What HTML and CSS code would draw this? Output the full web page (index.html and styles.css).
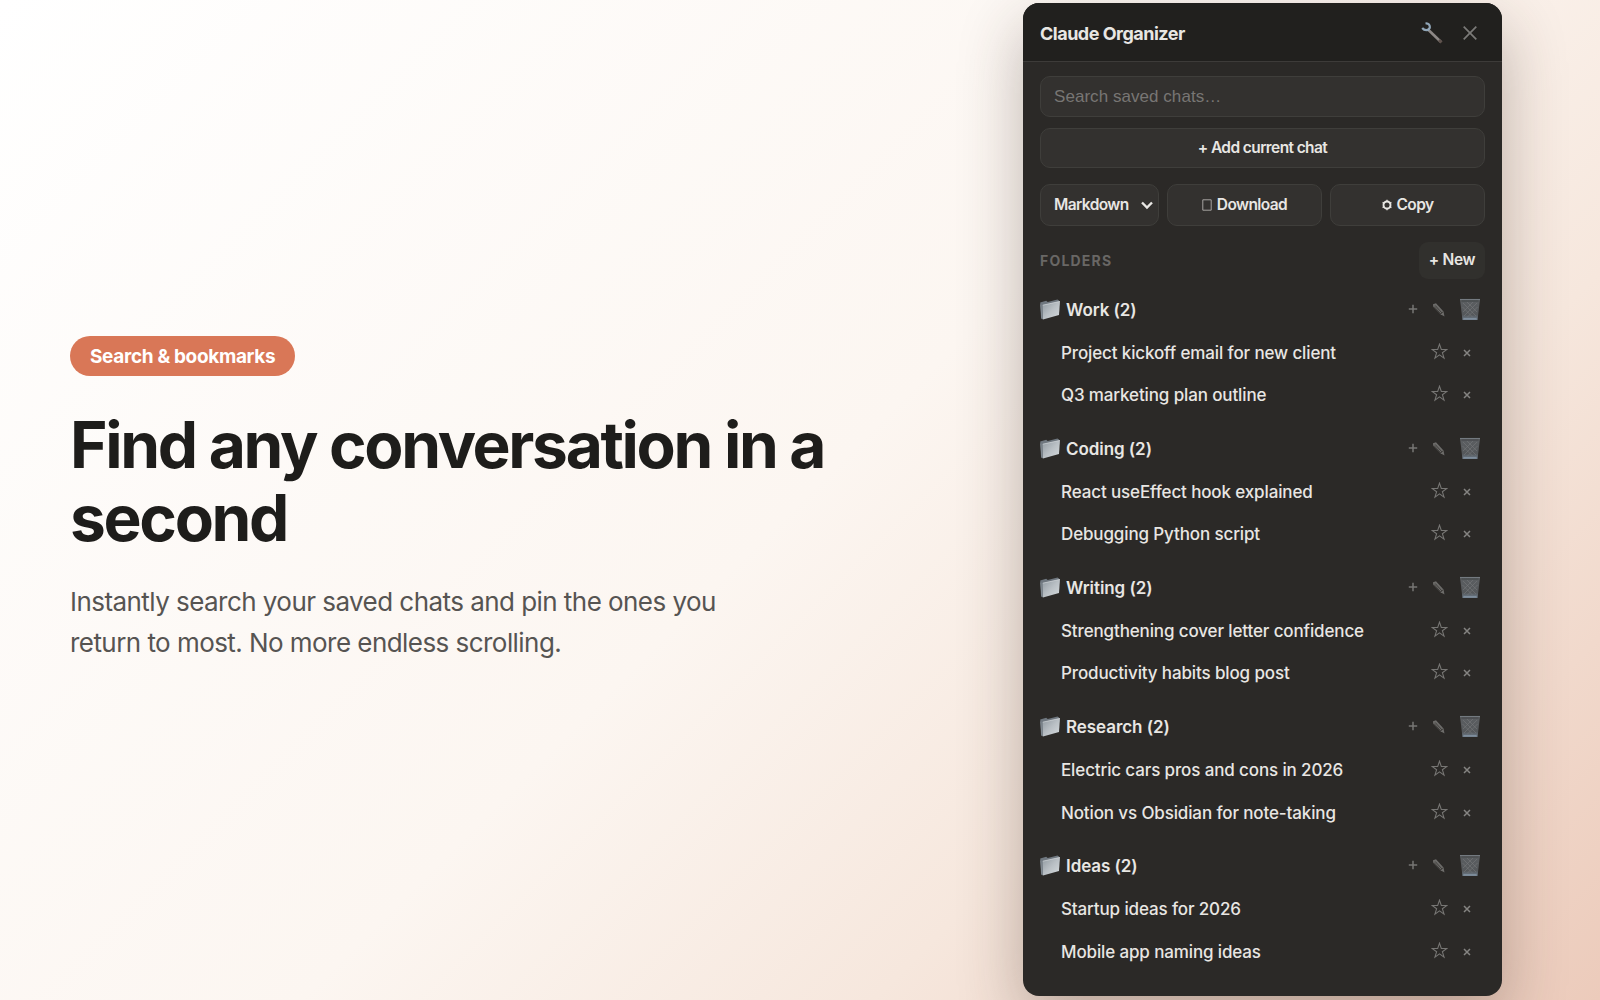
FILE: index.html
```html
<!DOCTYPE html>
<html lang="en">
<head>
<meta charset="utf-8">
<title>Claude Organizer</title>
<link rel="stylesheet" href="styles.css">
</head>
<body>
<svg class="defs" aria-hidden="true">
  <defs>
    <linearGradient id="paper" x1="0" y1="0" x2="1" y2="1"><stop offset="0" stop-color="#8f989f"/><stop offset=".5" stop-color="#b9bfc4"/><stop offset="1" stop-color="#d5dadd"/></linearGradient>
    <linearGradient id="bin" x1="0" y1="0" x2="0" y2="1"><stop offset="0" stop-color="#5c5f62"/><stop offset=".75" stop-color="#55585b"/><stop offset="1" stop-color="#71808f"/></linearGradient>
    <symbol id="i-folder" viewBox="0 0 21 21">
      <path d="M.2 3.500 6.200 1.800 7.700 3 17.500.5 19 1.500v3L2.500 20.500 1 18.500z" fill="#6f777f"/>
      <path d="M2.600 6 20 2.200 19 16 3 20.500z" fill="url(#paper)"/>
      <path d="M.8 5.500 2 20" stroke="#848d94" fill="none"/>
      <path d="M2.800 6.200 20 2.400" stroke="#dadee0" stroke-width=".6"/>
    </symbol>
    <symbol id="i-trash" viewBox="0 0 22 23">
      <path d="M1 1.500h20L18.500 22h-15z" fill="url(#bin)"/>
      <path d="M4 5l13 13M8 4l10 10M3.500 9l10 10M18 5 5 18M14 4 4 14M18.500 9l-10 10" stroke="#77797b" stroke-width=".6" fill="none"/>
      <path d="M1 1.500h20" stroke="#747a80" stroke-width="1.100" fill="none"/>
      <path d="M4.500 20.800h13" stroke="#8494a3" stroke-width="1.200" fill="none"/>
      <path d="M2.400 3h17.200" stroke="#46494b" stroke-width="1.200"/>
    </symbol>
    <symbol id="i-pencil" viewBox="0 0 14 16">
      <path d="M1 2.200 4 1.200 11.500 9.500 12.500 14.500 8.500 12.200 1.200 4.800z" fill="#6d6c6a"/>
      <path d="M3.200 3.500 10 11M2 4.500 8.800 12M8.800 12l2.400-2.500" stroke="#33312f" stroke-width=".8" fill="none"/>
    </symbol>
    <symbol id="i-star" viewBox="0 0 16 16">
      <path d="M8 1.100 9.700 6.100H15L10.700 9.200l1.600 5.100L8 11.200l-4.300 3.100 1.600-5.100L1 6.100h5.300z" fill="none" stroke="#777674" stroke-width="1"/>
    </symbol>
    <symbol id="i-plus" viewBox="0 0 10 10"><path d="M5 .8v8.400M.8 5h8.400" stroke="#777674" stroke-width="1.500"/></symbol>
    <symbol id="i-x" viewBox="0 0 8 8"><path d="M1 1l6 6M7 1 1 7" stroke="#858482" stroke-width="1.500"/></symbol>
  </defs>
</svg>
<main class="stage">
  <section class="hero">
    <span class="pill">Search &amp; bookmarks</span>
    <h1 class="headline">Find any conversation in a<br>second</h1>
    <p class="lead">Instantly search your saved chats and pin the ones you<br>return to most. No more endless scrolling.</p>
  </section>
  <aside class="panel">
    <header class="panel-head">
      <h2 class="panel-title">Claude Organizer</h2>
      <svg class="wrench" viewBox="0 0 22 22"><path d="M7 7.500 20 20" stroke="#8d8886" stroke-width="2.600"/><path d="M18 18l2.500 2.500" stroke="#5f524d" stroke-width="3"/><path d="M4.500 1.500c3-.5 4.800 1.800 4.200 4.500C7.500 8.800 3.500 9 1.200 6" fill="none" stroke="#91a6b8" stroke-width="2.200"/></svg>
      <svg class="close" viewBox="0 0 14 14"><path d="M.7.7l12.600 12.600M13.300.7.7 13.300" stroke="#7b7a78" stroke-width="1.700"/></svg>
    </header>
    <div class="panel-body">
      <div class="field">Search saved chats…</div>
      <button class="btn add">+ Add current chat</button>
      <div class="tools">
        <div class="btn select"><span>Markdown</span><svg class="chev" viewBox="0 0 14 10"><path d="M2 2.500l5 5 5-5" fill="none" stroke="#e8e6e3" stroke-width="2.400"/></svg></div>
        <button class="btn"><svg class="tofu" viewBox="0 0 10 12"><path d="M.8.8h8.400v10.400H.8z" fill="none" stroke="#a5a3a0" stroke-width="1"/></svg><span>Download</span></button>
        <button class="btn"><svg class="gear" viewBox="0 0 10 12"><circle cx="5" cy="6" r="3.500" fill="none" stroke="#e8e6e3" stroke-width="1.900"/><path d="M5 .8v2M5 9.200v2M.6 3.400l1.600 1M7.800 7.600l1.600 1M9.400 3.400l-1.600 1M2.200 7.600l-1.600 1" stroke="#e8e6e3" stroke-width="1.300"/></svg><span>Copy</span></button>
      </div>
      <div class="folders-head"><span class="label">FOLDERS</span><button class="new">+ New</button></div>
      <div class="folders" id="folders"></div>
    </div>
  </aside>
</main>
<script src="app.js"></script>
</body>
</html>
```
FILE: styles.css
```css
*{box-sizing:border-box}
body{margin:0;font-family:Inter,"Liberation Sans",sans-serif;color:#1e1d1b}
h1,h2,p{margin:0}
button{font:inherit;margin:0}
.defs{position:absolute;width:0;height:0}
.stage{width:1600px;height:1000px;overflow:hidden;display:flex;justify-content:space-between;padding:3px 98px 0 70px;background:linear-gradient(135deg,#fff 0%,#fcf6f1 50%,#f6e7dd 72%,#eccbbb 100%)}
.hero{padding-top:333px;display:flex;flex-direction:column;align-items:flex-start}
.pill{width:225px;height:40px;line-height:42px;padding-left:20px;border-radius:20px;background:#d97757;color:#fff;font-size:19px;font-weight:650;letter-spacing:-.34px;white-space:nowrap}
.headline{margin-top:33px;font-size:64px;line-height:72.600px;font-weight:700;letter-spacing:-2.320px;white-space:nowrap}
.lead{margin-top:27px;font-size:26px;line-height:41.200px;letter-spacing:-.55px;color:#565452;white-space:nowrap}
.panel{width:479px;height:993px;border-radius:16px;background:#2b2927;color:#e8e6e3;box-shadow:0 24px 64px rgba(60,40,30,.32);overflow:hidden}
.panel-head{height:59px;padding:1px 25px 0 17px;display:flex;align-items:center;background:#21201e;border-bottom:1px solid #3d3b39}
.panel-title{flex:1;padding-top:2px;font-size:18px;font-weight:650;letter-spacing:-.5px}
.wrench{width:22px;height:22px;margin-right:20px}
.close{width:14px;height:14px;margin-top:1px}
.panel-body{padding:14px 17px 0}
.field,.btn{border:1px solid #3f3e3b;border-radius:10px;background:#33312f}
.field{height:41px;padding:0 13px;line-height:40px;font-size:17px;font-family:"Liberation Sans",sans-serif;letter-spacing:.05px;color:#787674}
.btn{display:flex;align-items:center;justify-content:center;gap:5px;padding:0 0 2px;color:#e8e6e3;font-size:15.500px;font-weight:600;letter-spacing:-.6px}
.add{width:100%;height:40px;margin-top:11px}
.tools{display:grid;grid-template-columns:119px 1fr 1fr;gap:8px;margin-top:16px;height:42px}
.select{padding:0 4px 2px 13px;justify-content:space-between}
.chev{width:14px;height:10px;margin-top:2px}
.tofu,.gear{width:10px;height:12px;margin-top:1px}
.folders-head{display:flex;justify-content:space-between;align-items:center;margin-top:16px;height:37px}
.label{font-size:14px;font-weight:650;letter-spacing:1.200px;color:#696765}
.new{width:66px;height:37px;padding:0 0 3px;border:0;border-radius:9px;background:#31302d;color:#e8e6e3;font-size:15.500px;font-weight:600;letter-spacing:-.35px}
.folders{margin-top:9.500px}
.folder{height:139.100px}
.row{display:flex;align-items:center}
.folder-row{height:43px;font-size:17px;font-weight:630;letter-spacing:-.06px;padding-right:4px}
.item-row{height:42.500px;font-size:17px;font-weight:500;letter-spacing:-.13px;padding:0 14px 0 21px}
.name{flex:1;white-space:nowrap}
.folder-icon{width:21px;height:21px;margin:0 5px 2px 0}
.plus{width:10px;height:10px;margin:0 14px 2px 0}
.pencil{width:14px;height:16px;margin-right:13px}
.trash{width:22px;height:23px;margin-bottom:1px}
.star{width:17px;height:17px;margin:0 15px 3px 0}
.x{width:8px;height:8px}
```
FILE: app.js
```js
const folders = [
  ["Work", ["Project kickoff email for new client", "Q3 marketing plan outline"]],
  ["Coding", ["React useEffect hook explained", "Debugging Python script"]],
  ["Writing", ["Strengthening cover letter confidence", "Productivity habits blog post"]],
  ["Research", ["Electric cars pros and cons in 2026", "Notion vs Obsidian for note-taking"]],
  ["Ideas", ["Startup ideas for 2026", "Mobile app naming ideas"]],
];
const icon = (name, cls) => `<svg class="${cls}"><use href="#i-${name}"/></svg>`;
document.getElementById("folders").innerHTML = folders.map(([title, chats]) => `
  <section class="folder">
    <div class="row folder-row">${icon("folder", "folder-icon")}<span class="name">${title} (${chats.length})</span>${icon("plus", "plus")}${icon("pencil", "pencil")}${icon("trash", "trash")}</div>
    ${chats.map(c => `<div class="row item-row"><span class="name">${c}</span>${icon("star", "star")}${icon("x", "x")}</div>`).join("")}
  </section>`).join("");
```
